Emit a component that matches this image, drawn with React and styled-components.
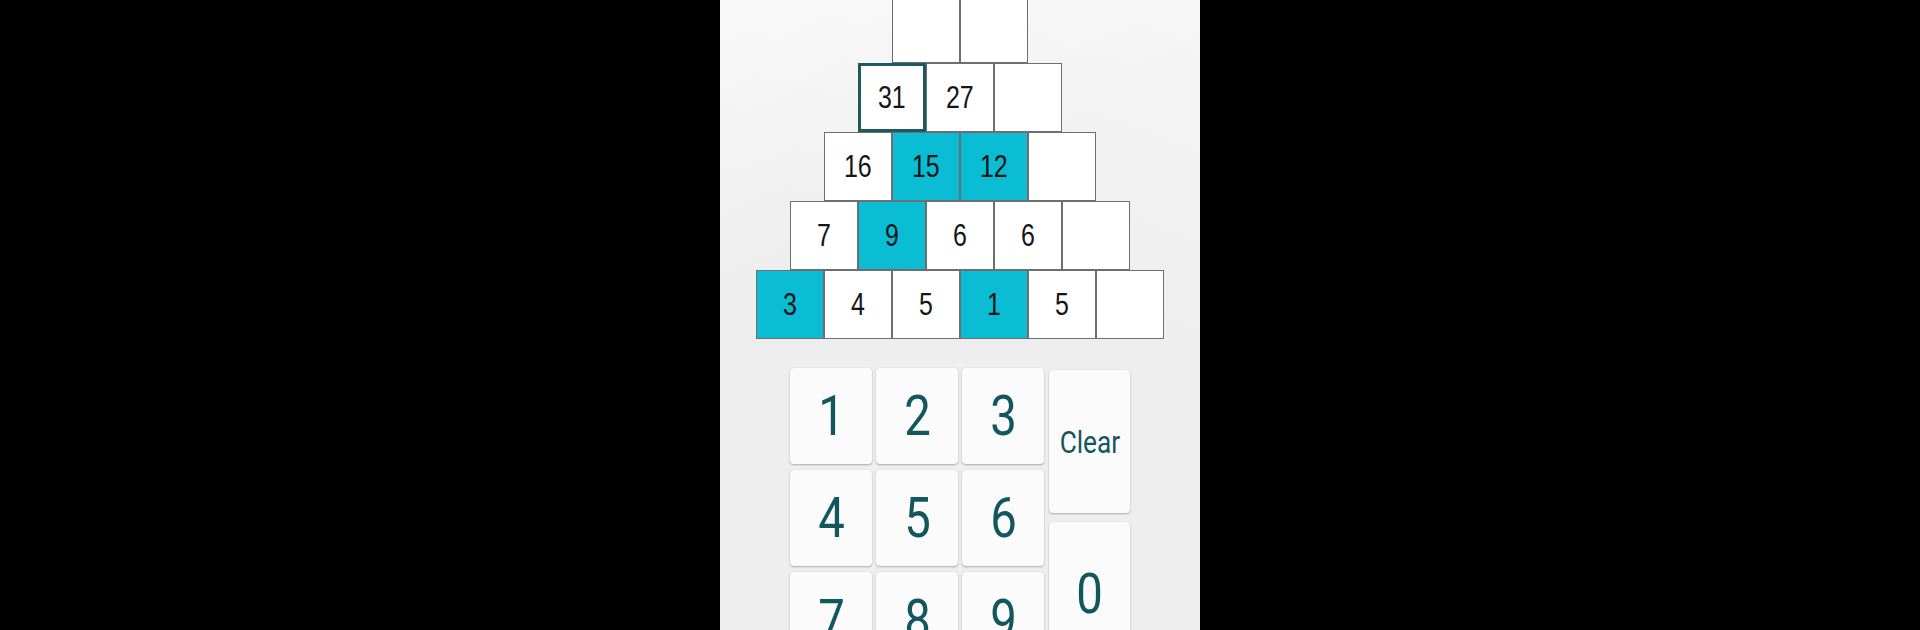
import React from 'react';
import styled, { createGlobalStyle } from 'styled-components';

const GlobalStyle = createGlobalStyle`
  html, body {
    margin: 0;
    padding: 0;
    background: #000;
  }
  body {
    font-family: Roboto, "Liberation Sans", sans-serif;
  }
`;

const Page = styled.div`
  display: flex;
  justify-content: center;
  width: 100%;
  height: 630px;
  background: #000;
`;

const Screen = styled.div`
  width: 480px;
  height: 630px;
  overflow: hidden;
  display: flex;
  flex-direction: column;
  align-items: center;
  background:
    linear-gradient(155deg, rgba(255, 255, 255, 0.55) 0%, rgba(255, 255, 255, 0) 35%),
    linear-gradient(20deg, rgba(255, 255, 255, 0) 55%, rgba(255, 255, 255, 0.45) 100%),
    #eeeeee;
`;

const Pyramid = styled.div`
  display: flex;
  flex-direction: column;
  align-items: center;
  margin-top: -6px;
`;

const Row = styled.div`
  display: flex;
  height: 69px;
`;

const Cell = styled.div`
  box-sizing: border-box;
  width: 68px;
  height: 69px;
  display: flex;
  align-items: center;
  justify-content: center;
  background: ${p => (p.$hint ? '#0bbcd5' : '#ffffff')};
  border: ${p => (p.$selected ? '3px solid #1d5a60' : '1px solid #6e6e6e')};
  color: #151515;
  font-family: "Liberation Sans", Arial, sans-serif;
  font-size: 32px;
`;

const CellText = styled.span`
  display: inline-block;
  transform: scaleX(0.78);
`;

const Keypad = styled.div`
  display: flex;
  gap: 5px;
  margin-top: 29px;
`;

const DigitGrid = styled.div`
  display: grid;
  grid-template-columns: repeat(3, 82px);
  grid-auto-rows: 96px;
  column-gap: 4px;
  row-gap: 6px;
`;

const SideColumn = styled.div`
  display: flex;
  flex-direction: column;
  gap: 9px;
  margin-top: 2px;
  width: 81px;
`;

const Key = styled.div`
  box-sizing: border-box;
  height: ${p => p.$tall ? '143px' : '96px'};
  display: flex;
  align-items: center;
  justify-content: center;
  background: #fbfbfb;
  border-radius: 4px;
  box-shadow: 0 1px 2px rgba(0, 0, 0, 0.28), 0 0 1px rgba(0, 0, 0, 0.12);
  color: #12565e;
  font-size: ${p => (p.$small ? '32px' : '55px')};
`;

const KeyText = styled.span`
  display: inline-block;
  transform: scaleX(${p => (p.$small ? 0.82 : 0.86)});
`;

const rows = [
  [{ v: '' }, { v: '' }],
  [{ v: '31', sel: true }, { v: '27' }, { v: '' }],
  [{ v: '16' }, { v: '15', hint: true }, { v: '12', hint: true }, { v: '' }],
  [{ v: '7' }, { v: '9', hint: true }, { v: '6' }, { v: '6' }, { v: '' }],
  [{ v: '3', hint: true }, { v: '4' }, { v: '5' }, { v: '1', hint: true }, { v: '5' }, { v: '' }],
];

const digits = ['1', '2', '3', '4', '5', '6', '7', '8', '9'];

export default function App() {
  return (
    <>
      <GlobalStyle />
      <Page>
        <Screen>
          <Pyramid>
            {rows.map((row, i) => (
              <Row key={i}>
                {row.map((c, j) => (
                  <Cell key={j} $hint={c.hint} $selected={c.sel}>
                    <CellText>{c.v}</CellText>
                  </Cell>
                ))}
              </Row>
            ))}
          </Pyramid>
          <Keypad>
            <DigitGrid>
              {digits.map(d => (
                <Key key={d}>
                  <KeyText>{d}</KeyText>
                </Key>
              ))}
            </DigitGrid>
            <SideColumn>
              <Key $tall $small>
                <KeyText $small>Clear</KeyText>
              </Key>
              <Key $tall>
                <KeyText>0</KeyText>
              </Key>
            </SideColumn>
          </Keypad>
        </Screen>
      </Page>
    </>
  );
}
